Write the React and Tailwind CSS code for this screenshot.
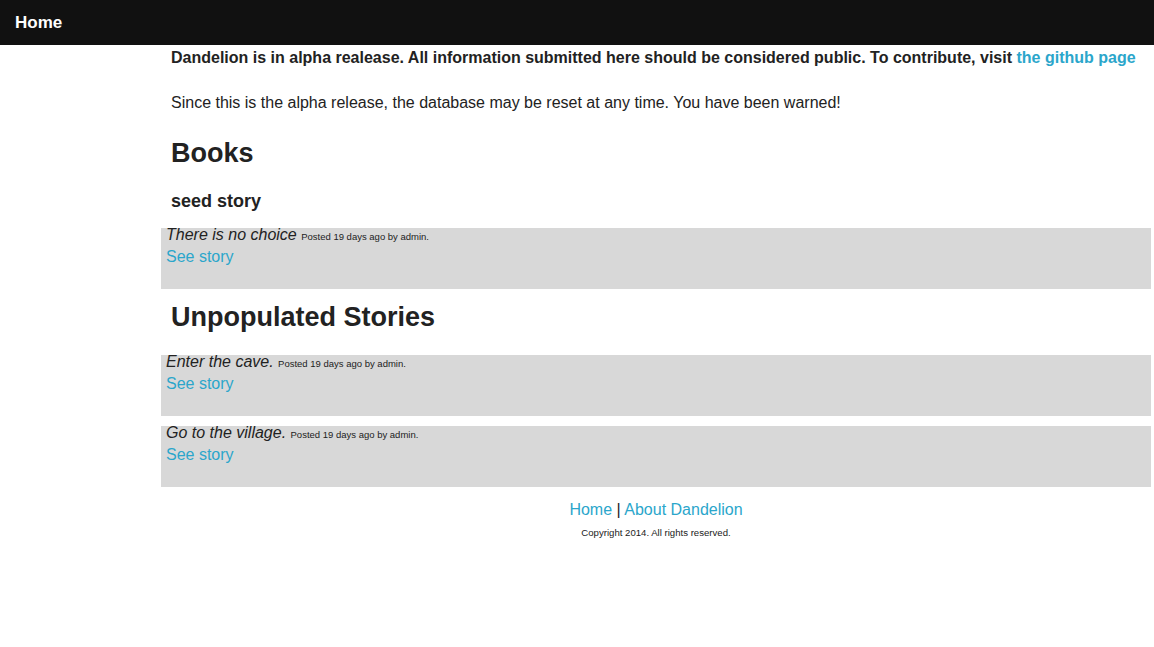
export default function App() {
  const font = { fontFamily: '"Liberation Sans", Arial, sans-serif' };

  function StoryBox({ title, className = "" }) {
    return (
      <div className={"bg-[#d8d8d8] h-[61px] pl-[5px] " + className}>
        <div className="leading-[14px]">
          <em className="text-[16px] text-[#222]">{title}</em>{" "}
          <span className="text-[9.5px] text-[#222]">Posted 19 days ago by admin.</span>
        </div>
        <a href="#" className="block text-[16px] leading-[21px] text-[#2ba6cb] mt-[2px]">
          See story
        </a>
      </div>
    );
  }

  return (
    <div className="min-h-screen bg-white text-[#222]" style={font}>
      <nav className="h-[45px] bg-[#111] flex items-center px-[15px]">
        <a href="#" className="text-white font-bold text-[17px]">Home</a>
      </nav>

      <div className="ml-[161px] mr-[3px]">
        <div className="px-[10px] pt-[1px]">
          <p className="font-bold text-[16px] leading-[24px]">
            Dandelion is in alpha realease. All information submitted here should be considered public. To contribute, visit{" "}
            <a href="#" className="text-[#2ba6cb]">the github page</a>
          </p>
          <p className="text-[16px] leading-[24px] mt-[21px]">
            Since this is the alpha release, the database may be reset at any time. You have been warned!
          </p>
          <h2 className="font-bold text-[27px] leading-[31px] mt-[23px]">Books</h2>
          <h3 className="font-bold text-[18px] leading-[22px] mt-[21px]">seed story</h3>
        </div>

        <StoryBox title="There is no choice" className="mt-[16px]" />

        <div className="px-[10px]">
          <h2 className="font-bold text-[27px] leading-[31px] mt-[13px]">Unpopulated Stories</h2>
        </div>

        <StoryBox title="Enter the cave." className="mt-[22px]" />
        <StoryBox title="Go to the village." className="mt-[10px]" />

        <footer className="text-center mt-[13px]">
          <div className="text-[16px] leading-[20px]">
            <a href="#" className="text-[#2ba6cb]">Home</a> | <a href="#" className="text-[#2ba6cb]">About Dandelion</a>
          </div>
          <p className="text-[9.6px] leading-[12px] mt-[7px]">Copyright 2014. All rights reserved.</p>
        </footer>
      </div>
    </div>
  );
}
